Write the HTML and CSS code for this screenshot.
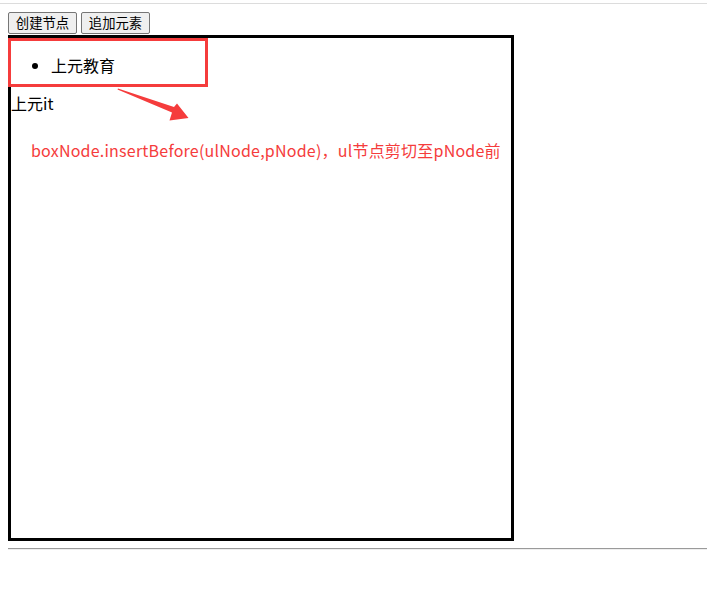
FILE: index.html
```html
<!DOCTYPE html>
<html>
<head>
<meta charset="utf-8">
<link rel="stylesheet" href="styles.css">
</head>
<body>
<div class="topline"></div>
<div class="page">
  <div class="toolbar">
    <button class="btn">创建节点</button>
    <button class="btn">追加元素</button>
  </div>
  <div class="box">
    <ul class="list"><li>上元教育</li></ul>
    <p class="para">上元it</p>
  </div>
  <hr class="rule">
  <div class="highlight"></div>
  <svg class="arrow" width="80" height="40" viewBox="110 85 80 40">
    <polygon points="118,88.5 174,107 177,103.5 188.5,118 169.5,120.5 172,112.5 117.5,89.5" fill="#f53c3c"/>
  </svg>
  <div class="note">boxNode.insertBefore(ulNode,pNode)，ul节点剪切至pNode前</div>
</div>
</body>
</html>
```
FILE: styles.css
```css
html, body {
  margin: 0;
  padding: 0;
  background: #fff;
}
body {
  font-family: "Microsoft YaHei", "Noto Sans CJK SC", "Noto Sans", sans-serif;
  font-size: 16px;
  color: #000;
}
.topline {
  margin-top: 3px;
  border-top: 1px solid #dcdcdc;
}
.page {
  position: relative;
  padding: 8px 0 0 8px;
}
.toolbar {
  display: flex;
  gap: 4px;
  margin-bottom: 1px;
}
.btn {
  font-family: "Microsoft YaHei", "Noto Sans CJK SC", sans-serif;
  font-size: 13.33px;
  height: 22px;
  width: 69px;
  padding: 0;
  line-height: 18px;
  background: #efefef;
  border: 1px solid #767676;
  border-radius: 2px;
  color: #000;
}
.box {
  width: 500px;
  height: 500px;
  border: 3px solid #000;
}
.list {
  margin: 16px 0;
  padding-left: 40px;
  line-height: 22px;
}
.para {
  margin: 0;
  line-height: 22px;
}
.rule {
  margin: 7px 0 0 0;
  border: 0;
  border-top: 1px solid #9a9a9a;
  border-bottom: 1px solid #eee;
  height: 0;
}
.highlight {
  position: absolute;
  left: 8px;
  top: 34px;
  width: 194px;
  height: 43px;
  border: 3px solid #f53c3c;
}
.arrow {
  position: absolute;
  left: 110px;
  top: 81px;
}
.note {
  position: absolute;
  left: 31px;
  top: 131px;
  color: #f53c3c;
  font-size: 16px;
  line-height: 30px;
  letter-spacing: 0.22px;
  white-space: nowrap;
}
```
